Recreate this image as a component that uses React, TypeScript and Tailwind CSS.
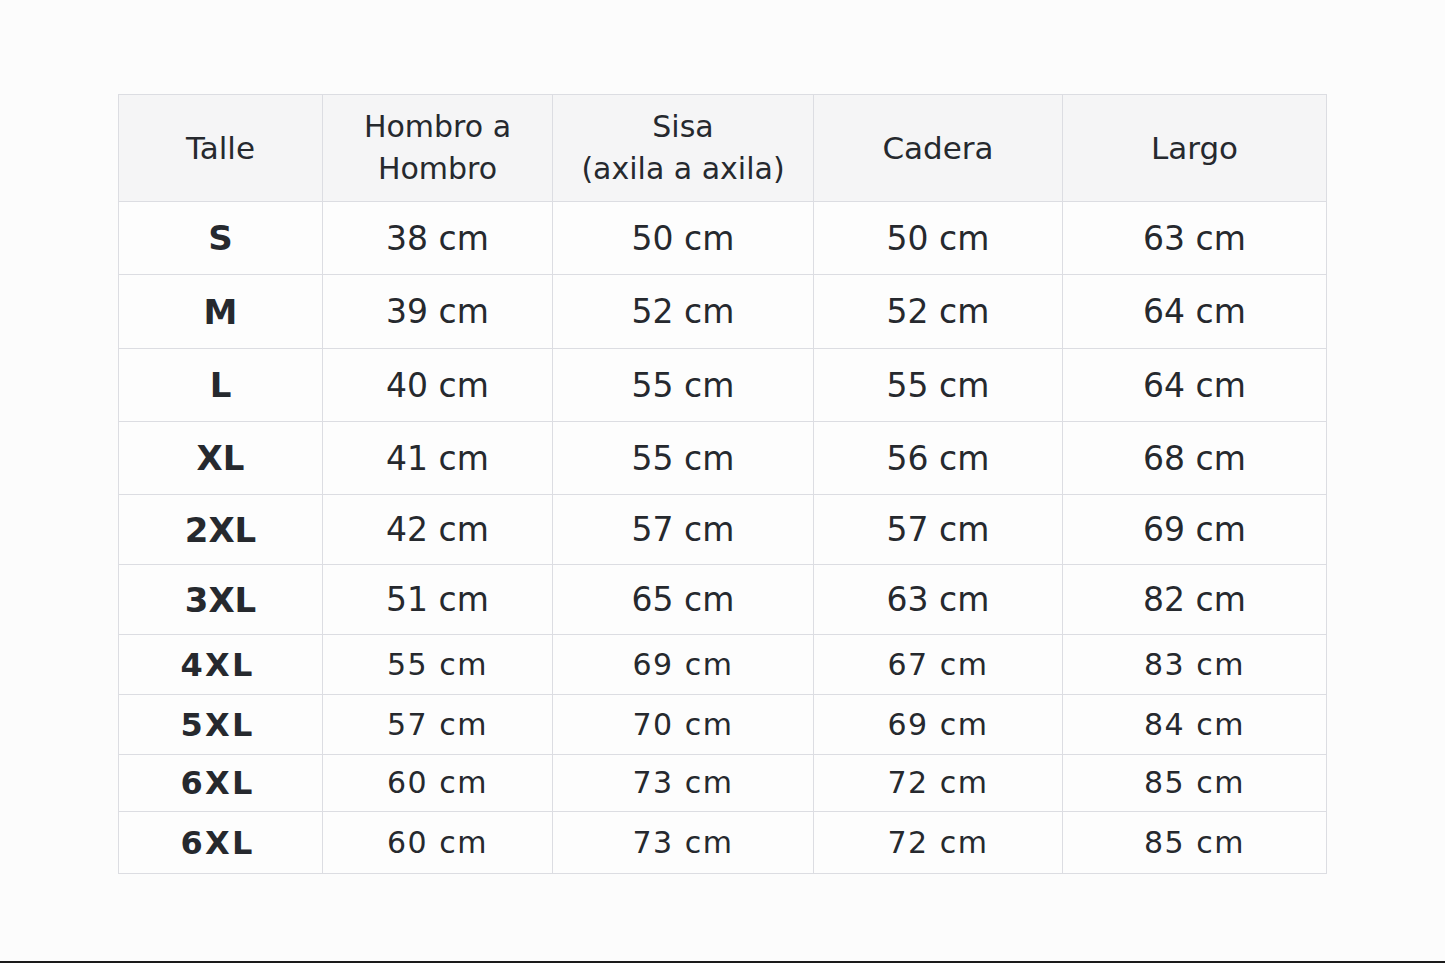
import React from "react";

const rows: { size: string; vals: string[]; h: number; small?: boolean }[] = [
  { size: "S", vals: ["38 cm", "50 cm", "50 cm", "63 cm"], h: 73 },
  { size: "M", vals: ["39 cm", "52 cm", "52 cm", "64 cm"], h: 74 },
  { size: "L", vals: ["40 cm", "55 cm", "55 cm", "64 cm"], h: 73 },
  { size: "XL", vals: ["41 cm", "55 cm", "56 cm", "68 cm"], h: 73 },
  { size: "2XL", vals: ["42 cm", "57 cm", "57 cm", "69 cm"], h: 70 },
  { size: "3XL", vals: ["51 cm", "65 cm", "63 cm", "82 cm"], h: 70 },
  { size: "4XL", vals: ["55 cm", "69 cm", "67 cm", "83 cm"], h: 60, small: true },
  { size: "5XL", vals: ["57 cm", "70 cm", "69 cm", "84 cm"], h: 60, small: true },
  { size: "6XL", vals: ["60 cm", "73 cm", "72 cm", "85 cm"], h: 57, small: true },
  { size: "6XL", vals: ["60 cm", "73 cm", "72 cm", "85 cm"], h: 62, small: true },
];

export default function App() {
  return (
    <div
      className="flex h-[963px] w-full flex-col bg-[#fcfcfc] text-[#26292e]"
      style={{ fontFamily: '"DejaVu Sans", "Noto Sans", sans-serif' }}
    >
      <div className="pl-[118px] pt-[94px]">
        <table className="w-[1208px] table-fixed border-collapse border border-[#dcdde2] bg-[#fdfdfd]">
          <colgroup>
            <col className="w-[204px]" />
            <col className="w-[230px]" />
            <col className="w-[261px]" />
            <col className="w-[249px]" />
            <col className="w-[264px]" />
          </colgroup>
          <thead>
            <tr className="h-[107px] bg-[#f5f5f6]">
              <th className="border border-[#dcdde2] text-center text-[31px] font-normal leading-[42px]">Talle</th>
              <th className="border border-[#dcdde2] text-center text-[30px] font-normal leading-[42px]">
                Hombro a<br />Hombro
              </th>
              <th className="border border-[#dcdde2] text-center text-[30px] font-normal leading-[42px]">
                Sisa<br />(axila a axila)
              </th>
              <th className="border border-[#dcdde2] text-center text-[31px] font-normal leading-[42px]">Cadera</th>
              <th className="border border-[#dcdde2] text-center text-[31px] font-normal leading-[42px]">Largo</th>
            </tr>
          </thead>
          <tbody>
            {rows.map((r, i) => (
              <tr key={i} style={{ height: r.h }}>
                <td
                  className={
                    r.small
                      ? "border border-[#dcdde2] pr-[6px] text-center text-[32px] font-bold leading-none tracking-[0.07em]"
                      : "border border-[#dcdde2] text-center text-[34px] font-bold leading-none"
                  }
                >
                  {r.size}
                </td>
                {r.vals.map((v, j) => (
                  <td
                    key={j}
                    className={
                      r.small
                        ? "border border-[#dcdde2] text-center text-[30px] leading-none tracking-[0.05em]"
                        : "border border-[#dcdde2] text-center text-[33px] leading-none"
                    }
                  >
                    {v}
                  </td>
                ))}
              </tr>
            ))}
          </tbody>
        </table>
      </div>
      <div className="mt-auto h-[2px] w-full bg-[#1a1a1a]" />
    </div>
  );
}
